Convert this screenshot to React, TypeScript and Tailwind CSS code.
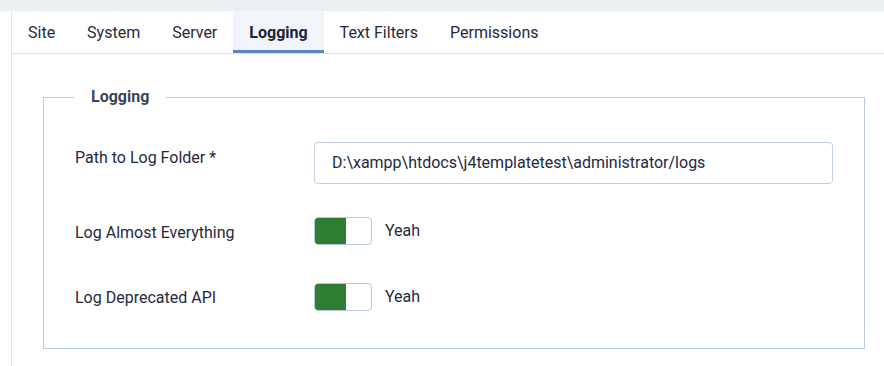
import React from "react";

const tabs = ["Site", "System", "Server", "Logging", "Text Filters", "Permissions"];

function Toggle() {
  return (
    <div className="flex items-center">
      <div className="flex h-[28px] w-[58px] overflow-hidden rounded-[4px] border border-[#b9c8dd] bg-white">
        <div className="h-full w-[31px] bg-[#2f7d32]" />
      </div>
      <span className="ml-[13px] text-[16px] leading-6 text-[#1f2a3c]">Yeah</span>
    </div>
  );
}

export default function App() {
  return (
    <div className="min-h-[366px] w-[884px] bg-white font-['Roboto',sans-serif]">
      <div className="h-[11px] bg-[#ebeff4]" />
      <div className="flex">
        <div className="w-[11px] shrink-0" />
        <div className="min-h-[355px] flex-1 border-l border-[#dde4ec]">
          <div className="flex h-[43px] border-b border-[#dbe2eb]">
            {tabs.map((t) => {
              const active = t === "Logging";
              return (
                <div
                  key={t}
                  className={
                    active
                      ? "flex h-[42px] items-center border-b-[3px] border-[#5b84c4] bg-[#f1f4f8] px-4 pt-[4px] text-[16px] font-bold text-[#1a2438]"
                      : "flex h-[42px] items-center px-4 pt-[1px] text-[16px] text-[#1f2a3c]"
                  }
                >
                  {t}
                </div>
              );
            })}
          </div>
          <div className="ml-[31px] mr-[19px] mt-[31px]">
            <fieldset className="border border-[#bccadd] px-[31px] pb-[37px]">
              <legend className="ml-[-1px] px-[17px] text-[16px] font-bold leading-6 text-[#3b4653]">
                Logging
              </legend>
              <div className="mt-[33px] grid grid-cols-[239px_1fr]">
                <div className="mt-[4px] text-[16px] leading-6 text-[#1f2a3c]">Path to Log Folder *</div>
                <div className="flex h-[42px] items-center rounded-[4px] border border-[#c3d0e2] pl-[17px] text-[16px] text-[#1f2a3c]">
                  D:\xampp\htdocs\j4templatetest\administrator/logs
                </div>
              </div>
              <div className="mt-[32px] grid grid-cols-[239px_1fr]">
                <div className="mt-[5px] text-[16px] leading-6 text-[#1f2a3c]">Log Almost Everything</div>
                <Toggle />
              </div>
              <div className="mt-[38px] grid grid-cols-[239px_1fr]">
                <div className="mt-[3px] text-[16px] leading-6 text-[#1f2a3c]">Log Deprecated API</div>
                <Toggle />
              </div>
            </fieldset>
          </div>
        </div>
      </div>
    </div>
  );
}
